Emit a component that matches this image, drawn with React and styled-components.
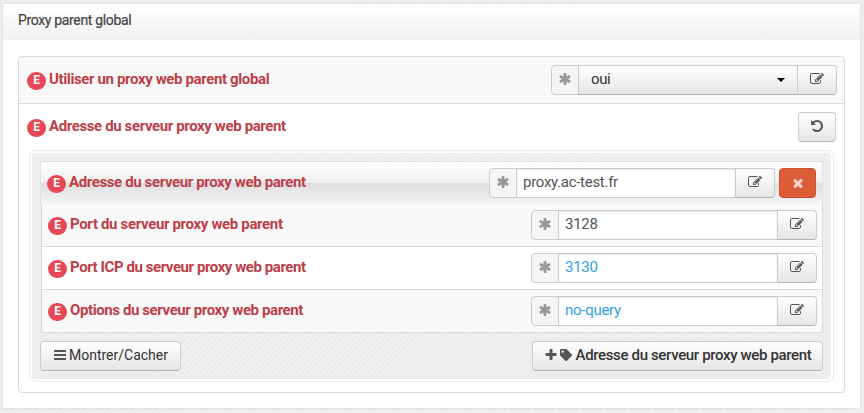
import React from 'react';
import styled, { createGlobalStyle, css } from 'styled-components';
import { FaTag } from 'react-icons/fa';

const parentFields = [
  { label: 'Port du serveur proxy web parent', value: '3128', spacing: -0.34 },
  { label: 'Port ICP du serveur proxy web parent', value: '3130', isDefault: true, spacing: -0.43 },
  { label: 'Options du serveur proxy web parent', value: 'no-query', isDefault: true, spacing: -0.4 },
];

const icons = {
  edit: 'M888 1184l116-116-152-152-116 116v56h96v96h56zm440-720q-16-16-33 1l-350 350q-17 17-1 33t33-1l350-350q17-17 1-33zm80 594v190q0 119-84.5 203.5t-203.5 84.5h-832q-119 0-203.5-84.5t-84.5-203.5v-832q0-119 84.5-203.5t203.5-84.5h832q63 0 117 25 15 7 18 23 3 17-9 29l-49 49q-14 14-32 8-23-6-45-6h-832q-66 0-113 47t-47 113v832q0 66 47 113t113 47h832q66 0 113-47t47-113v-126q0-13 9-22l64-64q15-15 35-7t20 29zm-96-738l288 288-672 672h-288v-288zm444 132l-92 92-288-288 92-92q28-28 68-28t68 28l152 152q28 28 28 68t-28 68z',
  asterisk: 'M1546 1050q46 26 59.5 77.5t-12.5 97.5l-64 110q-26 46-77.5 59.5t-97.5-12.5l-266-153v307q0 52-38 90t-90 38h-128q-52 0-90-38t-38-90v-307l-266 153q-46 26-97.5 12.5t-77.5-59.5l-64-110q-26-46-12.5-97.5t59.5-77.5l266-154-266-154q-46-26-59.5-77.5t12.5-97.5l64-110q26-46 77.5-59.5t97.5 12.5l266 153v-307q0-52 38-90t90-38h128q52 0 90 38t38 90v307l266-153q46-26 97.5-12.5t77.5 59.5l64 110q26 46 12.5 97.5t-59.5 77.5l-266 154z',
  undo: 'M1664 896q0 156-61 298t-164 245-245 164-298 61q-172 0-327-72.5t-264-204.5q-7-10-6.5-22.5t8.5-20.5l137-138q10-9 25-9 16 2 23 12 73 95 179 147t225 52q104 0 198.5-40.5t163.5-109.5 109.5-163.5 40.5-198.5-40.5-198.5-109.5-163.5-163.5-109.5-198.5-40.5q-98 0-188 35.5t-160 101.5l137 138q31 30 14 69-17 40-59 40h-448q-26 0-45-19t-19-45v-448q0-42 40-59 39-17 69 14l130 129q107-101 244.5-156.5t284.5-55.5q156 0 298 61t245 164 164 245 61 298z',
  times: 'M1490 1322q0 40-28 68l-136 136q-28 28-68 28t-68-28l-294-294-294 294q-28 28-68 28t-68-28l-136-136q-28-28-28-68t28-68l294-294-294-294q-28-28-28-68t28-68l136-136q28-28 68-28t68 28l294 294 294-294q28-28 68-28t68 28l136 136q28 28 28 68t-28 68l-294 294 294 294q28 28 28 68z',
  plus: 'M1600 736v192q0 40-28 68t-68 28h-416v416q0 40-28 68t-68 28h-192q-40 0-68-28t-28-68v-416h-416q-40 0-68-28t-28-68v-192q0-40 28-68t68-28h416v-416q0-40 28-68t68-28h192q40 0 68 28t28 68v416h416q40 0 68 28t28 68z',
  bars: 'M1664 1280v256h-1536v-256zM1664 768v256h-1536v-256zM1664 256v256h-1536v-256z',
};

const Icon = ({ name, size = 14 }) => (
  <svg width={size} height={size} viewBox="0 0 1792 1792" fill="currentColor" aria-hidden="true">
    <path d={icons[name]} />
  </svg>
);

const FieldLabel = ({ children, spacing }) => (
  <Label>
    <Badge>E</Badge>
    <LabelText $spacing={spacing}>{children}</LabelText>
  </Label>
);

const Field = ({ value, isDefault }) => (
  <InputGroup>
    <Addon><Icon name="asterisk" /></Addon>
    <Input type="text" defaultValue={value} $isDefault={isDefault} />
    <EditButton type="button" aria-label="Modifier"><Icon name="edit" /></EditButton>
  </InputGroup>
);

const App = () => {
  return (
    <>
      <GlobalStyle />
      <Panel>
        <PanelHeader>Proxy parent global</PanelHeader>
        <Settings>
          <Row>
            <FieldLabel spacing={-0.37}>Utiliser un proxy web parent global</FieldLabel>
            <InputGroup>
              <Addon><Icon name="asterisk" /></Addon>
              <Select type="button">
                oui
                <Caret />
              </Select>
              <EditButton type="button" aria-label="Modifier"><Icon name="edit" /></EditButton>
            </InputGroup>
          </Row>
          <GroupTitle>
            <FieldLabel spacing={-0.38}>Adresse du serveur proxy web parent</FieldLabel>
            <ResetButton type="button" aria-label="Annuler"><Icon name="undo" /></ResetButton>
          </GroupTitle>
          <Group>
            <GroupHeader>
              <FieldLabel spacing={-0.38}>Adresse du serveur proxy web parent</FieldLabel>
              <Actions>
                <Field value="proxy.ac-test.fr" />
                <DeleteButton type="button" aria-label="Supprimer"><Icon name="times" /></DeleteButton>
              </Actions>
            </GroupHeader>
            <FieldList>
              {parentFields.map((field) => (
                <FieldRow key={field.label}>
                  <FieldLabel spacing={field.spacing}>{field.label}</FieldLabel>
                  <Field value={field.value} isDefault={field.isDefault} />
                </FieldRow>
              ))}
            </FieldList>
            <Footer>
              <ToggleButton type="button">
                <Icon name="bars" />
                <span>Montrer/Cacher</span>
              </ToggleButton>
              <AddButton type="button">
                <Icon name="plus" />
                <FaTag size={12} />
                <span>Adresse du serveur proxy web parent</span>
              </AddButton>
            </Footer>
          </Group>
        </Settings>
      </Panel>
    </>
  );
};

export default App;

// Styled Components

const hatched = css`
  background-color: #efefef;
  background-image: repeating-linear-gradient(
    135deg,
    rgba(0, 0, 0, 0.025) 0,
    rgba(0, 0, 0, 0.025) 1px,
    transparent 1px,
    transparent 4.25px
  );
`;

const GlobalStyle = createGlobalStyle`
  * {
    box-sizing: border-box;
  }

  body {
    margin: 0;
    height: 413px;
    overflow: hidden;
    font-family: Roboto, "Liberation Sans", sans-serif;
    font-size: 15px;
    line-height: 20px;
    color: #444;
    ${hatched}
  }

  button, input {
    margin: 0;
    font: inherit;
  }

  svg {
    display: block;
    flex: none;
  }
`;

const Panel = styled.div`
  width: 857px;
  height: 404px;
  margin: 4px 0 0 3px;
  background: #fff;
  box-shadow: 0 0 2px rgba(0, 0, 0, 0.12);
`;

const PanelHeader = styled.div`
  height: 36px;
  padding: 6px 15px;
  font-size: 14px;
  letter-spacing: -0.34px;
  -webkit-text-stroke: 0.2px #444;
  background: linear-gradient(#fff, #f1f1f1);
`;

const Settings = styled.div`
  width: 827px;
  height: 337px;
  margin: 16px 15px 0;
  border: 1px solid #d9d9d9;
  border-radius: 4px;
`;

const Row = styled.div`
  display: flex;
  align-items: center;
  justify-content: space-between;
  height: 47px;
  padding: 0 7px 0 8px;
  border-bottom: 1px solid #d9d9d9;
  border-radius: 4px 4px 0 0;
  background: #f9f9f9;
`;

const GroupTitle = styled.div`
  display: flex;
  align-items: center;
  justify-content: space-between;
  height: 46px;
  padding: 0 8px;
`;

const Group = styled.div`
  width: 805px;
  height: 232px;
  margin-left: 10px;
  padding: 8px 8px 0;
  border: 1px solid #ebebeb;
  border-radius: 6px;
  box-shadow: inset 0 0 0 2px #fff;
  ${hatched}
`;

const GroupHeader = styled.div`
  display: flex;
  align-items: center;
  justify-content: space-between;
  width: 783px;
  height: 43px;
  margin: 2px 0 0 2px;
  padding: 0 6px;
  border: 1px solid #e0e0e0;
  border-bottom: 0;
  background: linear-gradient(#fff 0, #efefef 50%, #dfdfdf 50%, #f5f5f5 100%);
`;

const FieldList = styled.div`
  width: 782px;
  margin-left: 3px;
  border: solid #d9d9d9;
  border-width: 0 1px 0 1px;
`;

const FieldRow = styled.div`
  display: flex;
  align-items: center;
  justify-content: space-between;
  height: 43px;
  padding: 0 5px 0 6px;
  border-bottom: 1px solid #d9d9d9;
  background: #f9f9f9;

  &:nth-child(even) {
    background: #fff;
  }
`;

const Label = styled.label`
  display: flex;
  align-items: center;
  gap: 3px;
`;

const Badge = styled.span`
  width: 19px;
  height: 18px;
  margin-top: 2px;
  border-radius: 9px;
  background: #e84855;
  color: #fff;
  font-size: 12px;
  font-weight: bold;
  line-height: 16px;
  text-align: center;
`;

const LabelText = styled.span`
  margin-top: -2px;
  color: #bd3e47;
  font-size: 15px;
  font-weight: bold;
  letter-spacing: ${({ $spacing }) => $spacing}px;
  white-space: nowrap;
`;

const Actions = styled.div`
  display: flex;
  gap: 4px;
`;

const InputGroup = styled.div`
  display: flex;
  width: 286px;
  height: 30px;
`;

const Addon = styled.span`
  display: flex;
  align-items: center;
  justify-content: center;
  width: 28px;
  padding-bottom: 2px;
  border: 1px solid #ccc;
  border-radius: 4px 0 0 4px;
  background: #f5f5f5;
  color: #999;
`;

const Input = styled.input`
  width: 220px;
  margin-left: -1px;
  padding: 0 6px 2px;
  border: 1px solid #ccc;
  border-radius: 0;
  outline: none;
  box-shadow: inset 0 1px 2px rgba(0, 0, 0, 0.1);
  background: #fff;
  color: ${({ $isDefault }) => ($isDefault ? '#2f9fe5' : '#555')};
  letter-spacing: -0.28px;
`;

const Button = styled.button`
  display: flex;
  align-items: center;
  justify-content: center;
  height: 30px;
  padding: 0 0 2px;
  border: 1px solid #ccc;
  border-bottom-color: #b3b3b3;
  border-radius: 4px;
  background: linear-gradient(#fff, #e6e6e6);
  color: #555;
`;

const EditButton = styled(Button)`
  width: 40px;
  margin-left: -1px;
  border-radius: 0 4px 4px 0;
`;

const Select = styled(Button)`
  justify-content: space-between;
  width: 220px;
  margin-left: -1px;
  padding: 0 12px 2px;
  border-radius: 0;
  color: #333;
  letter-spacing: -0.4px;
`;

const Caret = styled.span`
  margin-top: 2px;
  border: 4px solid transparent;
  border-top-color: #000;
  border-bottom: 0;
`;

const ResetButton = styled(Button)`
  width: 38px;
`;

const DeleteButton = styled(Button)`
  width: 37px;
  padding-bottom: 1px;
  border-color: #c9532f;
  background: #dc5c38;
  color: #f8d5cb;
`;

const Footer = styled.div`
  display: flex;
  justify-content: space-between;
  width: 783px;
  margin: 8px 0 0 2px;
`;

const ToggleButton = styled(Button)`
  gap: 2px;
  width: 141px;

  span {
    color: #333;
    font-size: 14px;
  }
`;

const AddButton = styled(Button)`
  gap: 2px;
  width: 291px;

  span {
    margin-left: 2px;
    color: #333;
    font-size: 15px;
    font-weight: 500;
    letter-spacing: -0.35px;
    white-space: nowrap;
  }
`;
